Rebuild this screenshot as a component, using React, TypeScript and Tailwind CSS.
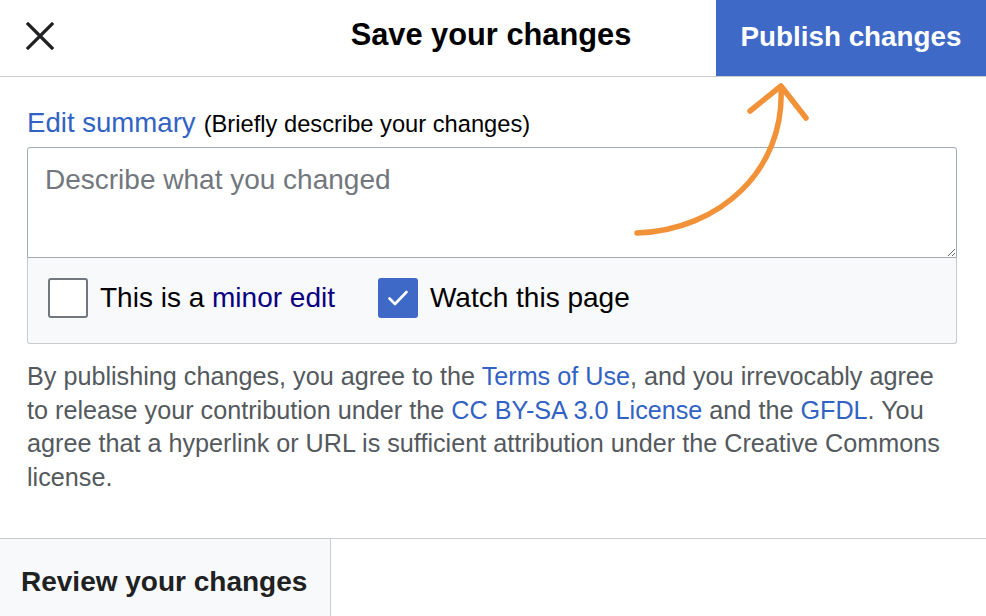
import React from "react";

const Checkbox = ({ checked }: { checked?: boolean }) =>
  checked ? (
    <span className="flex h-[40px] w-[40px] shrink-0 items-center justify-center rounded-[3px] bg-[#3e69c7]">
      <svg width="24" height="24" viewBox="0 0 24 24" fill="none">
        <path d="M3.5 12.5l5.5 5.5L20.5 6" stroke="#fff" strokeWidth="2.6" strokeLinecap="round" strokeLinejoin="round" />
      </svg>
    </span>
  ) : (
    <span className="h-[40px] w-[40px] shrink-0 rounded-[3px] border-2 border-[#72777d] bg-white" />
  );

export default function App() {
  return (
    <div className="relative h-[616px] w-[986px] overflow-hidden bg-white font-['Liberation_Sans',Arial,sans-serif] text-[#202122]">
      {/* header */}
      <div className="grid h-[77px] grid-cols-[270px_1fr_270px] border-b border-[#c8ccd1]">
        <div className="flex items-start pl-[26px] pt-[22px]">
          <svg width="28" height="28" viewBox="0 0 28 28" fill="none">
            <path d="M2 2l24 24M26 2L2 26" stroke="#202122" strokeWidth="3.2" strokeLinecap="square" />
          </svg>
        </div>
        <div className="flex items-center justify-center pb-[5px] pr-[4px] text-[30.8px] font-bold leading-none text-black">
          Save your changes
        </div>
        <div className="flex items-center justify-center bg-[#3e69c7] pb-[3px] text-[27.8px] font-bold leading-none text-white">
          Publish changes
        </div>
      </div>

      {/* body */}
      <div className="pl-[27px] pr-[29px] pt-[28px]">
        <div className="mb-[5px] flex items-baseline gap-[8px] leading-[35px]">
          <span className="text-[27.6px] text-[#3263c4]">Edit summary</span>
          <span className="text-[23.7px] text-black">(Briefly describe your changes)</span>
        </div>

        <div className="rounded-[3px]">
          <textarea
            placeholder="Describe what you changed"
            className="block h-[111px] w-full resize-y rounded-t-[3px] border border-[#a2a9b1] bg-white px-[17px] pt-[14px] text-[28px] leading-[35px] outline-none placeholder:text-[#72777d]"
          />
          <div className="flex h-[86px] items-center rounded-b-[3px] border-x border-b border-[#c8ccd1] bg-[#f8f9fa] pb-[5px] pl-[20px] text-[28px] text-black">
            <Checkbox />
            <span className="ml-[12px]">
              This is a <span className="text-[#0b0080]">minor edit</span>
            </span>
            <span className="ml-[43px]">
              <Checkbox checked />
            </span>
            <span className="ml-[12px]">Watch this page</span>
          </div>
        </div>

        <p className="mt-[16px] text-[25.2px] leading-[33.7px] text-[#54595d]">
          By publishing changes, you agree to the <span className="text-[#3263c4]">Terms of Use</span>, and you
          irrevocably agree to release your contribution under the{" "}
          <span className="text-[#3263c4]">CC BY-SA 3.0 License</span> and the{" "}
          <span className="text-[#3263c4]">GFDL</span>. You agree that a hyperlink or URL is sufficient attribution
          under the Creative Commons license.
        </p>
      </div>

      {/* footer */}
      <div className="absolute inset-x-0 top-[538px] flex border-t border-[#c8ccd1]">
        <div className="flex h-[86px] w-[331px] items-center border-r border-[#c8ccd1] bg-[#f8f9fa] pl-[21px] text-[28px] font-bold text-[#202122]">
          Review your changes
        </div>
      </div>

      {/* annotation arrow */}
      <svg className="pointer-events-none absolute left-0 top-0" width="986" height="616" viewBox="0 0 986 616" fill="none">
        <path d="M637 233 C720 230 785 170 781 88" stroke="#f29238" strokeWidth="5.5" strokeLinecap="round" />
        <path d="M750 111 L781 86 L806 118" stroke="#f29238" strokeWidth="5.5" strokeLinecap="round" strokeLinejoin="round" />
      </svg>
    </div>
  );
}
